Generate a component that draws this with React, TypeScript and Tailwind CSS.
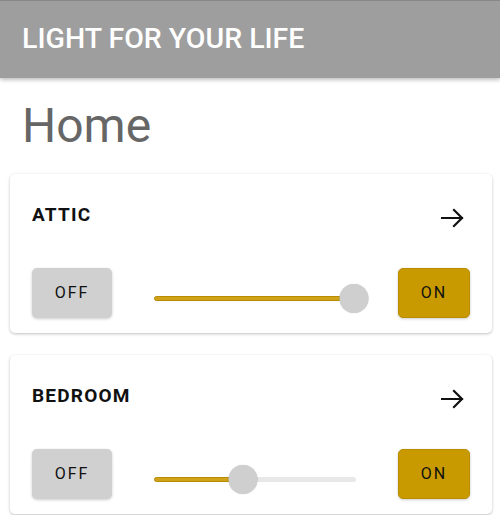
import { useState } from "react";

type Room = { name: string; level: number };

const ROOMS: Room[] = [
  { name: "ATTIC", level: 99 },
  { name: "BEDROOM", level: 44 },
];

function ArrowIcon() {
  return (
    <svg width="24" height="20" viewBox="0 0 24 20" fill="none" className="shrink-0 translate-y-[3px]">
      <path d="M1 10h20M13 2l8 8-8 8" stroke="#111" strokeWidth="2.2" strokeLinecap="square" />
    </svg>
  );
}

function Slider({ value }: { value: number }) {
  return (
    <div className="relative mx-[42px] h-[30px] flex-1 translate-y-[6px]">
      <div className="absolute left-0 right-0 top-[12px] h-[5px] rounded-full bg-[#e8e8e8]" />
      <div
        className="absolute left-0 top-[12px] h-[5px] rounded-full border border-[#b88c00] bg-[#d0a21a]"
        style={{ width: `${value}%` }}
      />
      <div
        className="absolute top-0 h-[29px] w-[29px] -translate-x-1/2 rounded-full bg-[#cfcfcf] shadow-[0_0_1px_rgba(0,0,0,0.25)]"
        style={{ left: `${value}%` }}
      />
    </div>
  );
}

function RoomCard({ room }: { room: Room }) {
  const [level] = useState(room.level);
  return (
    <div className="rounded-[5px] bg-white px-[22px] pb-[15px] pt-[31px] shadow-[0_1px_3px_rgba(0,0,0,0.25)]">
      <div className="flex items-center justify-between pr-[5px]">
        <span className="font-['Roboto'] text-[19px] font-bold leading-[20px] tracking-[1.2px] text-[#111]">
          {room.name}
        </span>
        <ArrowIcon />
      </div>
      <div className="mt-[43px] flex items-center">
        <button className="h-[50px] w-[80px] rounded-[5px] bg-[#d0d0d0] font-['Roboto'] text-[16px] font-normal tracking-[2px] text-[#111] shadow-[0_1px_3px_rgba(0,0,0,0.2)]">
          OFF
        </button>
        <Slider value={level} />
        <button className="h-[50px] w-[72px] rounded-[5px] border border-[#b88e00] bg-[#c99a00] font-['Roboto'] text-[16px] font-normal tracking-[2px] text-[#111] shadow-[0_1px_3px_rgba(0,0,0,0.2)]">
          ON
        </button>
      </div>
    </div>
  );
}

export default function App() {
  return (
    <div className="min-h-[515px] bg-white font-['Roboto',sans-serif]">
      <header className="flex h-[78px] items-center border-t border-[#888] bg-[#9e9e9e] px-[22px] shadow-[0_2px_4px_rgba(0,0,0,0.25)]">
        <h1 className="text-[28.5px] font-medium leading-none text-white">LIGHT FOR YOUR LIFE</h1>
      </header>
      <h2 className="px-[22px] pt-[20px] text-[48px] font-normal leading-[56px] text-[#666]">Home</h2>
      <div className="flex flex-col gap-[22px] pl-[10px] pr-[8px] pt-[20px]">
        {ROOMS.map((room) => (
          <RoomCard key={room.name} room={room} />
        ))}
      </div>
    </div>
  );
}
